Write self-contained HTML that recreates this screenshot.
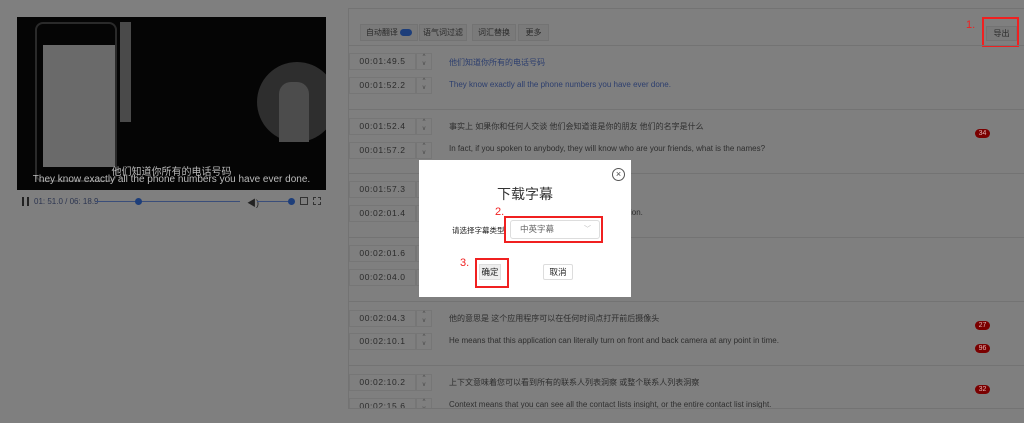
<!DOCTYPE html>
<html style="background:#7f7f7f"><head><meta charset="utf-8"><style>
*{margin:0;padding:0;box-sizing:border-box}
html,body{background:#7f7f7f}
body{width:1024px;height:423px;overflow:hidden;font-family:"Liberation Sans","Noto Sans CJK SC",sans-serif;position:relative;color:#2e2e2e}
.a{position:absolute}
.bg{left:0;top:0;width:1024px;height:423px;background:#7f7f7f}
.video{left:17px;top:17px;width:309px;height:173px;background:#050505;overflow:hidden}
.panel{left:348px;top:8px;width:676px;height:415px;border-left:1px solid #737373;border-top:1px solid #737373}
.tb{top:24px;height:17px;border:1px solid #737373;background:#7a7a7a;font-size:8px;line-height:15px;text-align:center;color:#2a2a2a}
.sep{left:348px;width:676px;height:1px;background:#737373}
.time{left:349px;width:67px;height:17px;border:1px solid #767676;font-family:"Liberation Sans",sans-serif;font-size:8.5px;line-height:15px;text-align:center;color:#2a2a2a;letter-spacing:.6px}
.arr{left:416px;width:16px;height:17px;border:1px solid #767676;font-size:6px;line-height:7px;text-align:center;color:#444}
.txt{left:449px;font-size:8px;color:#2e2e2e;white-space:nowrap}
.badge{left:975px;width:15px;height:9px;border-radius:5px;background:#7a0000;font-size:7px;line-height:9px;text-align:center;color:#e0b0b0}
.red{border:2px solid #f02020}
.rn{color:#f02020;font-size:11px}
</style></head><body>
<div class="a bg"></div>
<div class="a video">
 <div class="a" style="left:18px;top:5px;width:82px;height:160px;border:2px solid #2a2a2a;border-radius:8px"></div>
 <div class="a" style="left:26px;top:28px;width:72px;height:122px;background:#6a6a6a"></div>
 <div class="a" style="left:103px;top:5px;width:11px;height:100px;background:#4a4a4a"></div>
 <div class="a" style="left:240px;top:45px;width:80px;height:80px;border-radius:50%;background:#2e2e2e"></div>
 <div class="a" style="left:262px;top:65px;width:30px;height:60px;background:#4c4c4c;border-radius:12px 12px 0 0"></div>
 <div class="a" style="left:0;top:146px;width:309px;text-align:center;color:#bbb;font-size:10px">他们知道你所有的电话号码</div>
 <div class="a" style="left:0;top:157px;width:309px;text-align:center;color:#bbb;font-size:10px">They know exactly all the phone numbers you have ever done.</div>
</div>
<div class="a" style="left:22px;top:197px;width:2px;height:9px;background:#222"></div>
<div class="a" style="left:27px;top:197px;width:2px;height:9px;background:#222"></div>
<div class="a" style="left:34px;top:197px;font-size:8px;color:#2c3550">01: 51.0 / 06: 18.9</div>
<div class="a" style="left:96px;top:201px;width:144px;height:1px;background:#3a4e7a"></div>
<div class="a" style="left:135px;top:198px;width:7px;height:7px;border-radius:50%;background:#1d3e7a"></div>
<div class="a" style="left:247px;top:196px;font-size:9px;color:#222">◀)</div>
<div class="a" style="left:257px;top:201px;width:36px;height:1px;background:#3a4e7a"></div>
<div class="a" style="left:288px;top:198px;width:7px;height:7px;border-radius:50%;background:#1d3e7a"></div>
<div class="a" style="left:300px;top:197px;width:8px;height:8px;border:1px solid #333"></div>
<div class="a" style="left:313px;top:197px;width:8px;height:8px;border:1px dashed #333"></div>

<div class="a panel"></div>
<div class="a tb" style="left:360px;width:58px">自动翻译 <span style="display:inline-block;width:12px;height:7px;border-radius:4px;background:#1d3e7a;vertical-align:middle"></span></div>
<div class="a tb" style="left:419px;width:48px">语气词过滤</div>
<div class="a tb" style="left:472px;width:44px">词汇替换</div>
<div class="a tb" style="left:518px;width:31px">更多</div>
<div class="a tb" style="left:986px;width:31px;top:26px;height:15px;line-height:13px">导出</div>
<div class="a red" style="left:982px;top:17px;width:37px;height:30px"></div>
<div class="a rn" style="left:966px;top:19px">1.</div>

<div class="a sep" style="top:45px"></div>
<div class="a sep" style="top:109px"></div>
<div class="a sep" style="top:173px"></div>
<div class="a sep" style="top:237px"></div>
<div class="a sep" style="top:301px"></div>
<div class="a sep" style="top:365px"></div>

<div class="a time" style="top:53px">00:01:49.5</div><div class="a arr" style="top:53px">^<br>v</div>
<div class="a time" style="top:77px">00:01:52.2</div><div class="a arr" style="top:77px">^<br>v</div>
<div class="a txt" style="top:57px;color:#2c3e6e">他们知道你所有的电话号码</div>
<div class="a txt" style="top:80px;color:#2c3e6e">They know exactly all the phone numbers you have ever done.</div>

<div class="a time" style="top:118px">00:01:52.4</div><div class="a arr" style="top:118px">^<br>v</div>
<div class="a time" style="top:142px">00:01:57.2</div><div class="a arr" style="top:142px">^<br>v</div>
<div class="a txt" style="top:121px">事实上 如果你和任何人交谈 他们会知道谁是你的朋友 他们的名字是什么</div>
<div class="a txt" style="top:144px">In fact, if you spoken to anybody, they will know who are your friends, what is the names?</div>
<div class="a badge" style="top:129px">34</div>

<div class="a time" style="top:181px">00:01:57.3</div><div class="a arr" style="top:181px">^<br>v</div>
<div class="a time" style="top:205px">00:02:01.4</div><div class="a arr" style="top:205px">^<br>v</div>
<div class="a txt" style="top:208px;left:630px">ion.</div>
<div class="a time" style="top:245px">00:02:01.6</div><div class="a arr" style="top:245px">^<br>v</div>
<div class="a time" style="top:269px">00:02:04.0</div><div class="a arr" style="top:269px">^<br>v</div>

<div class="a time" style="top:310px">00:02:04.3</div><div class="a arr" style="top:310px">^<br>v</div>
<div class="a time" style="top:333px">00:02:10.1</div><div class="a arr" style="top:333px">^<br>v</div>
<div class="a txt" style="top:313px">他的意思是 这个应用程序可以在任何时间点打开前后摄像头</div>
<div class="a txt" style="top:336px">He means that this application can literally turn on front and back camera at any point in time.</div>
<div class="a badge" style="top:321px">27</div>
<div class="a badge" style="top:344px">96</div>

<div class="a time" style="top:374px">00:02:10.2</div><div class="a arr" style="top:374px">^<br>v</div>
<div class="a time" style="top:398px">00:02:15.6</div><div class="a arr" style="top:398px">^<br>v</div>
<div class="a txt" style="top:377px">上下文意味着您可以看到所有的联系人列表洞察 或整个联系人列表洞察</div>
<div class="a txt" style="top:400px">Context means that you can see all the contact lists insight, or the entire contact list insight.</div>
<div class="a badge" style="top:385px">32</div>
<div class="a badge" style="top:408px;height:4px"></div>
<div class="a" style="left:348px;top:408px;width:676px;height:15px;background:#7f7f7f;border-top:1px solid #737373"></div>

<div class="a" style="left:419px;top:160px;width:212px;height:137px;background:#fff"></div>
<div class="a" style="left:612px;top:168px;width:13px;height:13px;border:1px solid #555;border-radius:50%;font-size:9px;line-height:10px;text-align:center;color:#444">×</div>
<div class="a" style="left:419px;top:184px;width:212px;text-align:center;font-size:14px;color:#333">下载字幕</div>
<div class="a" style="left:452px;top:225px;font-size:7.5px;color:#222;white-space:nowrap">请选择字幕类型</div>
<div class="a" style="left:510px;top:220px;width:90px;height:19px;border:1px solid #ddd;border-radius:3px;font-size:8.5px;line-height:17px;padding-left:9px;color:#666">中英字幕<span style="position:absolute;right:8px;color:#bbb;font-size:7px">﹀</span></div>
<div class="a red" style="left:504px;top:216px;width:99px;height:27px"></div>
<div class="a rn" style="left:495px;top:206px">2.</div>
<div class="a" style="left:479px;top:264px;width:22px;height:16px;background:#eee;border:1px solid #ddd;font-size:8.5px;line-height:14px;text-align:center;color:#222">确定</div>
<div class="a red" style="left:475px;top:258px;width:34px;height:30px"></div>
<div class="a rn" style="left:460px;top:257px">3.</div>
<div class="a" style="left:543px;top:264px;width:30px;height:16px;border:1px solid #ddd;border-radius:2px;font-size:8.5px;line-height:14px;text-align:center;color:#222">取消</div>
</body></html>
